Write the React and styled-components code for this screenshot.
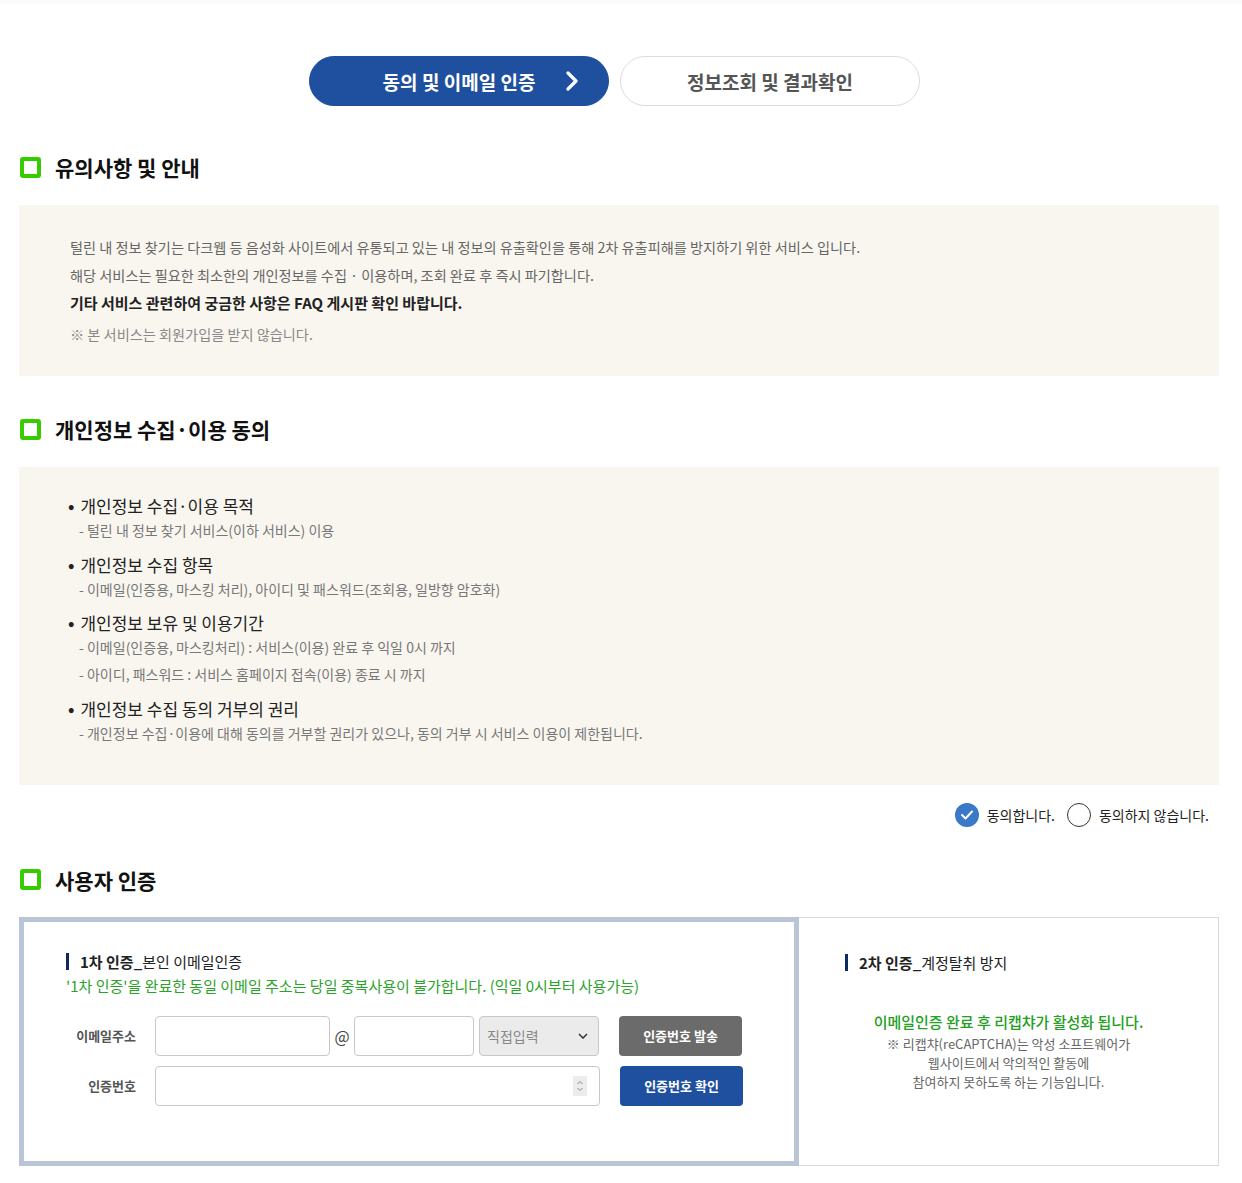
import React from 'react';
import styled, { createGlobalStyle } from 'styled-components';

const GlobalStyle = createGlobalStyle`
  body {
    margin: 0;
    background: #fff;
    font-family: "Noto Sans CJK KR", "Noto Sans", sans-serif;
    color: #222;
  }
  * { box-sizing: border-box; }
`;

const TopBand = styled.div`
  height: 4px;
  background: #fafafa;
`;

const Page = styled.div`
  width: 1200px;
  margin-left: 19px;
  padding-bottom: 16px;
`;

const Steps = styled.div`
  display: flex;
  gap: 11px;
  margin: 52px 0 0 290px;
`;

const Step = styled.div`
  width: 300px;
  height: 50px;
  border-radius: 25px;
  display: grid;
  grid-template-columns: 1fr auto 1fr;
  align-items: center;
  font-size: 19px;
  font-weight: 700;
  background: ${p => (p.$active ? '#1f4f9f' : '#fff')};
  color: ${p => (p.$active ? '#fff' : '#555')};
  border: 1px solid ${p => (p.$active ? '#1f4f9f' : '#dcdcdc')};
  svg {
    justify-self: end;
    margin-right: 29px;
  }
`;

const Heading = styled.h2`
  display: flex;
  align-items: center;
  gap: 14px;
  margin: ${p => p.$top}px 0 0 1px;
  height: 30px;
  font-size: 21px;
  font-weight: 700;
  color: #111;
`;

const GreenBox = styled.span`
  width: 21px;
  height: 21px;
  border: 4px solid #36cc00;
  border-radius: 3px;
`;

const InfoBox = styled.div`
  margin-top: 23px;
  background: #f9f6f0;
  padding: ${p => p.$pad};
`;

const Line = styled.p`
  margin: 0;
  font-size: ${p => (p.$bold ? '15px' : '14.2px')};
  font-weight: ${p => (p.$bold ? 700 : 400)};
  line-height: ${p => (p.$bold ? '27px' : '28px')};
  color: ${p => (p.$bold ? '#222' : p.$muted ? '#888' : '#666')};
  margin-top: ${p => (p.$gap ? '4px' : '0')};
`;

const Item = styled.div`
  & + & { margin-top: 10.5px; }
`;

const ItemTitle = styled.div`
  font-size: 17px;
  line-height: 24px;
  color: #222;
  &::before {
    content: "•";
    margin-right: 6px;
    font-weight: 700;
  }
`;

const ItemSub = styled.div`
  font-size: 14px;
  line-height: 24px;
  color: #777;
  padding-left: 11px;
  & + & { margin-top: 3px; }
`;

const AgreeRow = styled.div`
  margin-top: 15px;
  height: 30px;
  display: flex;
  justify-content: flex-end;
  align-items: center;
  padding-right: 10px;
  gap: 12px;
`;

const Radio = styled.label`
  display: flex;
  align-items: center;
  gap: 8px;
  font-size: 14px;
  color: #222;
`;

const Circle = styled.span`
  width: 24px;
  height: 24px;
  border-radius: 50%;
  display: flex;
  align-items: center;
  justify-content: center;
  background: ${p => (p.$on ? '#3a78c8' : '#fff')};
  border: ${p => (p.$on ? 'none' : '1.5px solid #333')};
`;

const AuthBox = styled.div`
  margin-top: 22px;
  display: flex;
  height: 249px;
`;

const FirstPanel = styled.div`
  width: 780px;
  border: 5px solid #b9c4d6;
  padding: 28px 0 0 42px;
`;

const SecondPanel = styled.div`
  flex: 1;
  border: 1px solid #d9d9d9;
  border-left: none;
  padding: 33px 0 0 46px;
`;

const PanelTitle = styled.div`
  display: flex;
  align-items: center;
  font-size: 15px;
  line-height: 24px;
  color: #222;
  &::before {
    content: "";
    width: 3px;
    height: 17px;
    background: #0d2b5e;
    margin-right: 11px;
  }
  b { font-weight: 700; }
`;

const Notice = styled.div`
  font-size: 15px;
  line-height: 24px;
  color: #2ca22a;
`;

const FormRow = styled.div`
  display: flex;
  align-items: center;
  margin-top: ${p => p.$top}px;
  height: 40px;
`;

const Label = styled.div`
  width: 70px;
  margin-right: 19px;
  text-align: right;
  font-size: 13px;
  font-weight: 700;
  color: #555;
`;

const Field = styled.div`
  position: relative;
  width: ${p => p.$w}px;
  height: 40px;
  border: 1px solid #c8c8c8;
  border-radius: 4px;
  background: #fff;
`;

const At = styled.span`
  width: 24px;
  text-align: center;
  font-size: 16px;
  color: #444;
`;

const Select = styled.div`
  width: 120px;
  height: 40px;
  margin-left: 5px;
  border: 1px solid #c8c8c8;
  border-radius: 4px;
  background: #ebebeb;
  display: flex;
  align-items: center;
  justify-content: space-between;
  padding: 0 10px 0 7px;
  font-size: 14px;
  color: #888;
`;

const Spinner = styled.span`
  position: absolute;
  right: 12px;
  top: 9px;
  width: 14px;
  height: 20px;
  background: #ececec;
  display: flex;
  align-items: center;
  justify-content: center;
`;

const Button = styled.button`
  width: 123px;
  height: 40px;
  margin-left: ${p => p.$ml}px;
  border: none;
  border-radius: 4px;
  background: ${p => (p.$blue ? '#1f4f9f' : '#6b6b6b')};
  color: #fff;
  font-family: inherit;
  font-size: 13px;
  font-weight: 700;
`;

const Captcha = styled.div`
  margin: 35px 0 0 -46px;
  text-align: center;
`;

const CaptchaLead = styled.div`
  font-size: 15px;
  font-weight: 500;
  line-height: 24px;
  color: #22a01e;
`;

const CaptchaText = styled.div`
  font-size: 13px;
  line-height: 19px;
  color: #666;
`;

const Chevron = () => (
  <svg width="14" height="20" viewBox="0 0 14 20">
    <polyline points="3,2 11,10 3,18" fill="none" stroke="#fff" strokeWidth="3.2" strokeLinecap="round" strokeLinejoin="round" />
  </svg>
);

const Check = () => (
  <svg width="14" height="12" viewBox="0 0 14 12">
    <polyline points="2,6 5.5,9.5 12,2.5" fill="none" stroke="#fff" strokeWidth="2" strokeLinecap="round" strokeLinejoin="round" />
  </svg>
);

export default function App() {
  return (
    <>
      <GlobalStyle />
      <TopBand />
      <Page>
        <Steps>
          <Step $active><span /><span>동의 및 이메일 인증</span><Chevron /></Step>
          <Step><span /><span>정보조회 및 결과확인</span><span /></Step>
        </Steps>

        <Heading $top={46}><GreenBox />유의사항 및 안내</Heading>
        <InfoBox $pad="28px 51px">
          <Line>털린 내 정보 찾기는 다크웹 등 음성화 사이트에서 유통되고 있는 내 정보의 유출확인을 통해 2차 유출피해를 방지하기 위한 서비스 입니다.</Line>
          <Line>해당 서비스는 필요한 최소한의 개인정보를 수집 · 이용하며, 조회 완료 후 즉시 파기합니다.</Line>
          <Line $bold>기타 서비스 관련하여 궁금한 사항은 FAQ 게시판 확인 바랍니다.</Line>
          <Line $muted $gap>※ 본 서비스는 회원가입을 받지 않습니다.</Line>
        </InfoBox>

        <Heading $top={38}><GreenBox />개인정보 수집·이용 동의</Heading>
        <InfoBox $pad="27px 49px 40px">
          <Item>
            <ItemTitle>개인정보 수집·이용 목적</ItemTitle>
            <ItemSub>- 털린 내 정보 찾기 서비스(이하 서비스) 이용</ItemSub>
          </Item>
          <Item>
            <ItemTitle>개인정보 수집 항목</ItemTitle>
            <ItemSub>- 이메일(인증용, 마스킹 처리), 아이디 및 패스워드(조회용, 일방향 암호화)</ItemSub>
          </Item>
          <Item>
            <ItemTitle>개인정보 보유 및 이용기간</ItemTitle>
            <ItemSub>- 이메일(인증용, 마스킹처리) : 서비스(이용) 완료 후 익일 0시 까지</ItemSub>
            <ItemSub>- 아이디, 패스워드 : 서비스 홈페이지 접속(이용) 종료 시 까지</ItemSub>
          </Item>
          <Item>
            <ItemTitle>개인정보 수집 동의 거부의 권리</ItemTitle>
            <ItemSub>- 개인정보 수집·이용에 대해 동의를 거부할 권리가 있으나, 동의 거부 시 서비스 이용이 제한됩니다.</ItemSub>
          </Item>
        </InfoBox>

        <AgreeRow>
          <Radio><Circle $on><Check /></Circle>동의합니다.</Radio>
          <Radio><Circle />동의하지 않습니다.</Radio>
        </AgreeRow>

        <Heading $top={35}><GreenBox />사용자 인증</Heading>
        <AuthBox>
          <FirstPanel>
            <PanelTitle><b>1차 인증_</b>본인 이메일인증</PanelTitle>
            <Notice>'1차 인증'을 완료한 동일 이메일 주소는 당일 중복사용이 불가합니다. (익일 0시부터 사용가능)</Notice>
            <FormRow $top={18}>
              <Label>이메일주소</Label>
              <Field $w={175} />
              <At>@</At>
              <Field $w={120} />
              <Select>
                직접입력
                <svg width="10" height="6" viewBox="0 0 10 6">
                  <polyline points="1,1 5,5 9,1" fill="none" stroke="#333" strokeWidth="1.5" />
                </svg>
              </Select>
              <Button $ml={20}>인증번호 발송</Button>
            </FormRow>
            <FormRow $top={10}>
              <Label>인증번호</Label>
              <Field $w={445}>
                <Spinner>
                  <svg width="8" height="14" viewBox="0 0 8 14">
                    <polyline points="1.5,5 4,2.5 6.5,5" fill="none" stroke="#888" strokeWidth="1" />
                    <polyline points="1.5,9 4,11.5 6.5,9" fill="none" stroke="#888" strokeWidth="1" />
                  </svg>
                </Spinner>
              </Field>
              <Button $ml={20} $blue>인증번호 확인</Button>
            </FormRow>
          </FirstPanel>
          <SecondPanel>
            <PanelTitle><b>2차 인증_</b>계정탈취 방지</PanelTitle>
            <Captcha>
              <CaptchaLead>이메일인증 완료 후 리캡챠가 활성화 됩니다.</CaptchaLead>
              <CaptchaText>※ 리캡챠(reCAPTCHA)는 악성 소프트웨어가</CaptchaText>
              <CaptchaText>웹사이트에서 악의적인 활동에</CaptchaText>
              <CaptchaText>참여하지 못하도록 하는 기능입니다.</CaptchaText>
            </Captcha>
          </SecondPanel>
        </AuthBox>
      </Page>
    </>
  );
}
